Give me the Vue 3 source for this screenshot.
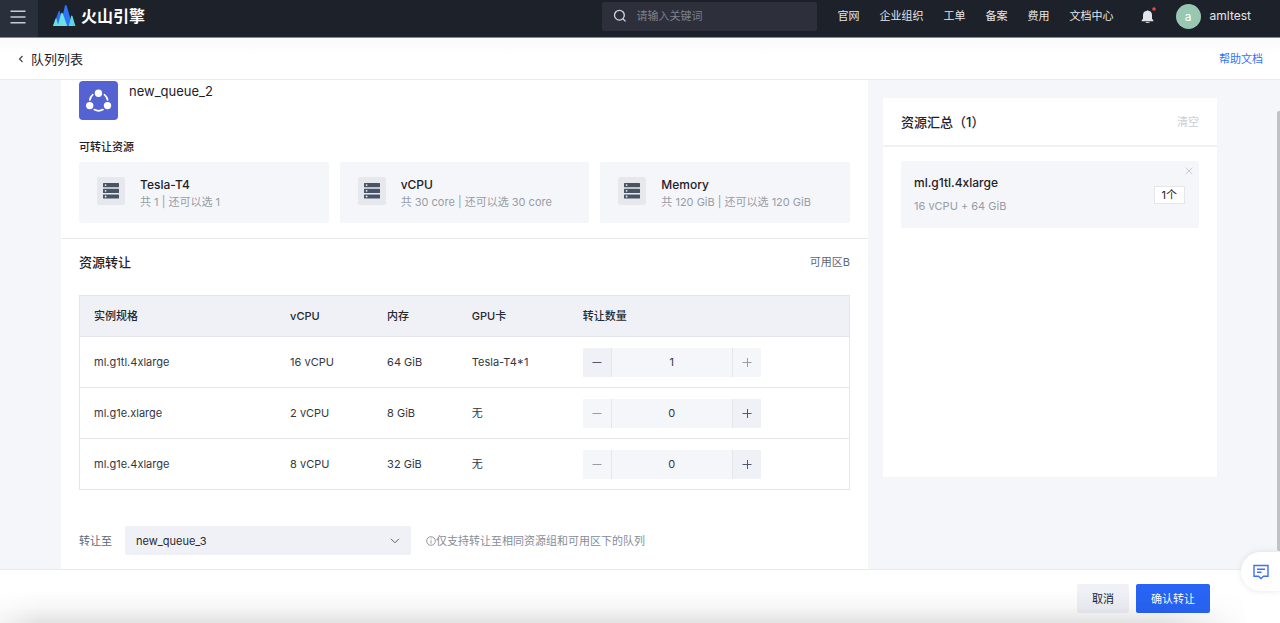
<script setup>
import { ref, computed } from 'vue'

const navLinks = ['官网', '企业组织', '工单', '备案', '费用', '文档中心']
const resources = [
  { name: 'Tesla-T4', detail: '共 1 | 还可以选 1' },
  { name: 'vCPU', detail: '共 30 core | 还可以选 30 core' },
  { name: 'Memory', detail: '共 120 GiB | 还可以选 120 GiB' },
]
const specs = ref([
  { name: 'ml.g1tl.4xlarge', cpu: '16 vCPU', mem: '64 GiB', gpu: 'Tesla-T4*1', count: 1, max: 1 },
  { name: 'ml.g1e.xlarge', cpu: '2 vCPU', mem: '8 GiB', gpu: '无', count: 0, max: 5 },
  { name: 'ml.g1e.4xlarge', cpu: '8 vCPU', mem: '32 GiB', gpu: '无', count: 0, max: 3 },
])
const target = ref('new_queue_3')
const selected = computed(() => specs.value.filter((s) => s.count > 0))
</script>

<template>
  <div class="page">
    <header class="topbar">
      <button class="menu" type="button" aria-label="菜单">
        <svg width="16" height="14" viewBox="0 0 16 14" fill="none" stroke="#c9ccd2" stroke-width="1.4">
          <path d="M.5 1.3h15M.5 7h15M.5 12.7h15" />
        </svg>
      </button>
      <a class="brand" href="#">
        <svg width="24" height="22" viewBox="0 0 24 22">
          <path d="M8.2 7.6 12 21H1.2L6.2 7.6Q7.2 4 8.2 7.6Z" fill="#2f6bf2" />
          <path d="M12.7 1.4Q13.8-1.2 14.9 1.4L20.5 21H8.5Z" fill="#2b74f5" />
          <path d="M3.4 14.1Q4 12.4 4.6 14.1L6.3 21H1Z" fill="#6adfe5" />
          <path d="M9 9.1Q10 6.4 11 9.1L15.2 21H5.6Z" fill="#6ee2e2" />
          <path d="M19 11.6Q19.8 9.4 20.6 11.6L23.4 21H16.8Z" fill="#5ad5e4" />
        </svg>
        <span>火山引擎</span>
      </a>
      <label class="search">
        <svg width="14" height="14" viewBox="0 0 14 14" fill="none" stroke="#d4d7de" stroke-width="1.3">
          <circle cx="6.4" cy="6.2" r="4.9" /><path d="m9.9 9.8 2.6 2.6" />
        </svg>
        <input type="text" placeholder="请输入关键词" aria-label="搜索" />
      </label>
      <nav class="nav">
        <a v-for="l in navLinks" :key="l" href="#">{{ l }}</a>
      </nav>
      <button class="bell" type="button" aria-label="通知">
        <svg width="16" height="18" viewBox="0 0 16 18">
          <path d="M6.9 3.8a.9.9 0 0 1 1.6 0A4.4 4.4 0 0 1 12 8.2v3.6l1.3 1.5v.9H1.7v-.9L3 11.800V8.200a4.500 4.500 0 0 1 3.900-4.400Z" fill="#e3e5ea" />
          <path d="M5.700 14.900h3.800v.9H5.700z" fill="#e3e5ea" />
          <circle cx="14" cy="2" r="1.800" fill="#f0453f" />
        </svg>
      </button>
      <button class="user" type="button"><span class="avatar">a</span>amltest</button>
    </header>

    <div class="subbar">
      <a class="back" href="#">
        <svg width="6" height="8" viewBox="0 0 6 8" fill="none" stroke="#42464e" stroke-width="1.2"><path d="M4.500 1 1.500 4l3 3" /></svg>
        队列列表
      </a>
      <a class="help" href="#">帮助文档</a>
    </div>

    <main class="body">
      <section class="panel">
        <div class="overview">
          <div class="queue">
            <span class="queue-icon">
              <svg width="39" height="39" viewBox="0 0 39 39">
                <g fill="none" stroke="#fff" stroke-width="1.700" stroke-linecap="round">
                  <path d="M10.800 19a9.300 9.300 0 0 1 3-5.300M25.400 13.700a9.300 9.300 0 0 1 3.200 5.300M15.200 28.600a9.300 9.300 0 0 0 8.800 0" />
                </g>
                <g fill="#fff"><circle cx="19.500" cy="12.300" r="3.700" /><circle cx="10.700" cy="24.600" r="3.700" /><circle cx="28.500" cy="24.600" r="3.700" /></g>
              </svg>
            </span>
            <h1>new_queue_2</h1>
          </div>
          <h2 class="label">可转让资源</h2>
          <div class="cards">
            <div v-for="r in resources" :key="r.name" class="card">
              <span class="card-icon">
                <svg width="16" height="16" viewBox="0 0 16 16">
                  <g fill="#485464"><rect width="16" height="4.200" rx=".5" /><rect y="5.700" width="16" height="4.200" rx=".5" /><rect y="11.400" width="16" height="4.200" rx=".5" /></g>
                  <g fill="#e9ebf0"><circle cx="2.600" cy="2.100" r=".9" /><circle cx="2.600" cy="7.800" r=".9" /><circle cx="2.600" cy="13.500" r=".9" /></g>
                </svg>
              </span>
              <div class="card-text">
                <div class="card-name">{{ r.name }}</div>
                <div class="card-detail">{{ r.detail }}</div>
              </div>
            </div>
          </div>
        </div>

        <div class="transfer">
          <div class="transfer-head">
            <h2>资源转让</h2>
            <span>可用区B</span>
          </div>
          <table>
            <colgroup>
              <col class="c-name" /><col class="c-cpu" /><col class="c-mem" /><col class="c-gpu" /><col />
            </colgroup>
            <thead>
              <tr><th>实例规格</th><th>vCPU</th><th>内存</th><th>GPU卡</th><th>转让数量</th></tr>
            </thead>
            <tbody>
              <tr v-for="s in specs" :key="s.name">
                <td>{{ s.name }}</td>
                <td>{{ s.cpu }}</td>
                <td>{{ s.mem }}</td>
                <td>{{ s.gpu }}</td>
                <td>
                  <div class="stepper">
                    <button type="button" aria-label="减少" :disabled="s.count <= 0" @click="s.count--">
                      <svg width="10" height="10" viewBox="0 0 10 10" stroke="currentColor"><path d="M.5 5.500h9" /></svg>
                    </button>
                    <input v-model.number="s.count" type="text" :aria-label="s.name + ' 转让数量'" />
                    <button type="button" aria-label="增加" :disabled="s.count >= s.max" @click="s.count++">
                      <svg width="10" height="10" viewBox="0 0 10 10" stroke="currentColor"><path d="M.5 5.500h9M5.500 1v9" /></svg>
                    </button>
                  </div>
                </td>
              </tr>
            </tbody>
          </table>
          <div class="target">
            <label for="target">转让至</label>
            <div class="select">
              <select id="target" v-model="target">
                <option>new_queue_3</option>
              </select>
              <svg width="10" height="6" viewBox="0 0 10 6" fill="none" stroke="#565d6b"><path d="m1 .8 4 4 4-4" /></svg>
            </div>
            <p class="hint">
              <svg width="10" height="10" viewBox="0 0 10 10" fill="none" stroke="currentColor" stroke-width=".9">
                <circle cx="5" cy="5" r="4.300" /><path d="M5 2.300v1M5 4.300v3.300" />
              </svg>仅支持转让至相同资源组和可用区下的队列
            </p>
          </div>
        </div>
      </section>

      <aside class="summary">
        <div class="summary-head">
          <h2>资源汇总（{{ selected.length }}）</h2>
          <button type="button" disabled>清空</button>
        </div>
        <div v-for="s in selected" :key="s.name" class="item">
          <div>
            <div class="item-name">{{ s.name }}</div>
            <div class="item-detail">{{ s.cpu }} + {{ s.mem }}</div>
          </div>
          <span class="item-count">{{ s.count }}个</span>
          <button class="item-close" type="button" aria-label="移除" @click="s.count = 0">
            <svg width="8" height="8" viewBox="0 0 8 8" stroke="#c3c7cf" stroke-width=".9"><path d="m.7.7 6.600 6.600M7.300.7.7 7.300" /></svg>
          </button>
        </div>
      </aside>
      <span class="scroll-thumb"></span>
    </main>

    <footer class="actions">
      <button class="cancel" type="button">取消</button>
      <button class="confirm" type="button">确认转让</button>
    </footer>
    <button class="feedback" type="button" aria-label="反馈">
      <svg width="16" height="16" viewBox="0 0 16 16" fill="none" stroke="#3d70f5" stroke-width="1.400">
        <path d="M1 1.500h14v10.700h-4.500L8 14.500l-2.500-2.300H1z" /><path d="M4 5.300h8M4 8.300h4.500" />
      </svg>
    </button>
  </div>
</template>

<style>
body {
  margin: 0;
}
</style>

<style scoped>
.page {
  position: relative;
  display: flex;
  flex-direction: column;
  height: 100vh;
  overflow: hidden;
  background: #f5f6fa;
  color: #1d2129;
  font: 11px/16px Inter, "Noto Sans CJK SC", sans-serif;
}
.page * {
  box-sizing: border-box;
}
button, input, select {
  margin: 0;
  padding: 0;
  border: 0;
  border-radius: 0;
  background: none;
  color: inherit;
  font: inherit;
}
svg {
  flex: none;
  display: block;
}
h1, h2, p {
  margin: 0;
  font-size: 13px;
  font-weight: 500;
}
a {
  color: inherit;
  text-decoration: none;
}
.topbar {
  flex: none;
  display: flex;
  align-items: center;
  height: 38px;
  padding: 0 29px 5px 0;
  border-bottom: 1px solid #85888c;
  background: #1d2129;
  color: #e5e6eb;
}
.menu {
  display: grid;
  place-items: center;
  align-self: flex-start;
  width: 38px;
  height: 37px;
  padding: 0 3px 3px 0;
  margin-bottom: -5px;
  background: #29303c;
}
.brand {
  display: flex;
  align-items: center;
  gap: 5px;
  margin: 0 auto 0 14px;
  color: #fff;
  font-size: 16px;
  font-weight: 700;
}
.search {
  display: flex;
  align-items: center;
  gap: 10px;
  width: 215px;
  height: 29px;
  margin-right: 21px;
  padding: 0 11px;
  border-radius: 2px;
  background: #2d303b;
}
.search input {
  flex: 1;
  min-width: 0;
  outline: none;
}
.search input::placeholder {
  color: #7d818b;
}
.nav {
  display: flex;
  gap: 20px;
}
.bell {
  margin: 0 20px 0 26px;
}
.user {
  display: flex;
  align-items: center;
  gap: 9px;
  font-size: 12px;
}
.avatar {
  width: 25px;
  height: 25px;
  border-radius: 50%;
  background: #98c7b2;
  line-height: 25px;
  text-align: center;
  color: #fff;
}
.subbar {
  flex: none;
  display: flex;
  align-items: center;
  justify-content: space-between;
  height: 42px;
  padding: 0 17px 0 18px;
  border-bottom: 1px solid #e9eaee;
  background: linear-gradient(#fafafa, #fff 16px);
}
.back {
  display: flex;
  align-items: center;
  gap: 7px;
  font-size: 13px;
}
.help {
  color: #3370ff;
}
.body {
  position: relative;
  flex: 1;
  min-height: 0;
  display: grid;
  grid-template-columns: minmax(0, 1fr) 334px;
  gap: 15px;
  padding: 0 63px 0 61px;
}
.panel {
  background: #fff;
}
.overview {
  padding: 1px 18px 15px;
  border-bottom: 1px solid #e9eaee;
}
.queue {
  display: flex;
  gap: 11px;
}
.queue-icon {
  border-radius: 4px;
  background: #5562d2;
}
.queue h1 {
  margin-top: 2px;
  font-weight: 400;
}
.label {
  margin: 19px 0 7px;
  font-size: 11px;
}
.cards {
  display: grid;
  grid-template-columns: repeat(3, 1fr);
  gap: 11px;
}
.card {
  display: flex;
  align-items: center;
  gap: 15px;
  height: 61px;
  padding: 0 18px;
  border-radius: 2px;
  background: #f5f6fa;
}
.card-icon {
  display: grid;
  place-items: center;
  width: 28px;
  height: 28px;
  margin-bottom: 4px;
  border-radius: 2px;
  background: #e7e8ee;
}
.card-name {
  font-size: 12px;
  font-weight: 500;
  line-height: 18px;
}
.card-detail {
  color: #979ca6;
}
.transfer {
  padding: 15px 18px 0;
}
.transfer-head {
  display: flex;
  align-items: center;
  justify-content: space-between;
  margin-bottom: 25px;
  color: #5e6675;
}
.transfer-head h2 {
  color: #1d2129;
}
table {
  width: 100%;
  border-collapse: collapse;
  table-layout: fixed;
  border: 1px solid #e5e6eb;
  color: #33373f;
}
.c-name { width: 25.4%; }
.c-cpu { width: 12.6%; }
.c-mem { width: 11%; }
.c-gpu { width: 14.4%; }
th, td {
  padding: 0 15px;
  border-bottom: 1px solid #e5e6eb;
  text-align: left;
}
th {
  height: 41px;
  background: #f0f1f6;
  color: #24282f;
  font-weight: 500;
}
td {
  height: 51px;
}
th:first-child, td:first-child {
  padding-left: 14px;
}
.stepper {
  display: flex;
  width: 178px;
  height: 29px;
}
.stepper button {
  display: grid;
  place-items: center;
  width: 28px;
  background: #f0f1f6;
  color: #4e5969;
}
.stepper button:disabled {
  background: #f5f6fa;
  color: #979ca6;
}
.stepper input {
  flex: 1;
  min-width: 0;
  border: solid #e5e6eb;
  border-width: 0 1px;
  background: #f5f6fa;
  text-align: center;
}
.target {
  display: flex;
  align-items: center;
  margin-top: 36px;
  color: #5e6675;
}
.select {
  display: grid;
  align-items: center;
  width: 286px;
  margin: 0 15px 0 13px;
}
.select > * {
  grid-area: 1 / 1;
}
.select select {
  width: 100%;
  height: 29px;
  padding: 0 11px;
  border-radius: 2px;
  appearance: none;
  background: #f0f1f6;
  color: #24282f;
}
.select svg {
  justify-self: end;
  margin-right: 11px;
  pointer-events: none;
}
.hint {
  display: flex;
  align-items: center;
  font-size: 11px;
  font-weight: 400;
  color: #868d99;
}
.summary {
  align-self: start;
  height: 379px;
  margin-top: 18px;
  background: #fff;
}
.summary-head {
  display: flex;
  align-items: center;
  justify-content: space-between;
  height: 49px;
  padding: 0 18px;
  border-bottom: 2px solid #f0f1f4;
}
.summary-head button {
  color: #c9cdd4;
}
.item {
  position: relative;
  display: flex;
  align-items: center;
  justify-content: space-between;
  height: 67px;
  margin: 14px 18px;
  padding: 0 14px 0 13px;
  border-radius: 2px;
  background: #f5f6fa;
}
.item-name {
  margin-bottom: 7px;
  font-size: 12px;
  font-weight: 500;
}
.item-detail {
  color: #979ca6;
}
.item-count {
  padding: 0 7px;
  border: 1px solid #e5e6eb;
  background: #fff;
}
.item-close {
  position: absolute;
  top: 6px;
  right: 6px;
}
.scroll-thumb {
  position: absolute;
  top: 31px;
  right: 0;
  bottom: 18px;
  width: 3px;
  border-radius: 2px 0 0 2px;
  background: #c1c2c4;
}
.actions {
  position: relative;
  flex: none;
  display: flex;
  justify-content: flex-end;
  gap: 7px;
  height: 54px;
  padding: 14px 70px 0;
  border-top: 1px solid #e9eaee;
  background: #fff;
}
.actions::after {
  content: "";
  position: absolute;
  inset: 20px 0 0;
  background: linear-gradient(transparent, rgba(0, 0, 0, 0.03) 50%, rgba(0, 0, 0, 0.11));
  mask-image: linear-gradient(90deg, rgba(0, 0, 0, 0.4), #000 40px, #000 calc(100% - 120px), transparent calc(100% - 30px));
  pointer-events: none;
}
.actions button {
  height: 29px;
  padding: 0 15px;
  border-radius: 2px;
}
.cancel {
  background: #f0f1f6;
}
.confirm {
  background: #2864f5;
  color: #fff;
}
.feedback {
  position: absolute;
  right: 0;
  bottom: 32px;
  display: flex;
  align-items: center;
  width: 39px;
  height: 39px;
  padding-left: 12px;
  border-radius: 20px 0 0 20px;
  background: #fff;
  box-shadow: 0 0 6px rgba(0, 0, 0, 0.1);
}
</style>
